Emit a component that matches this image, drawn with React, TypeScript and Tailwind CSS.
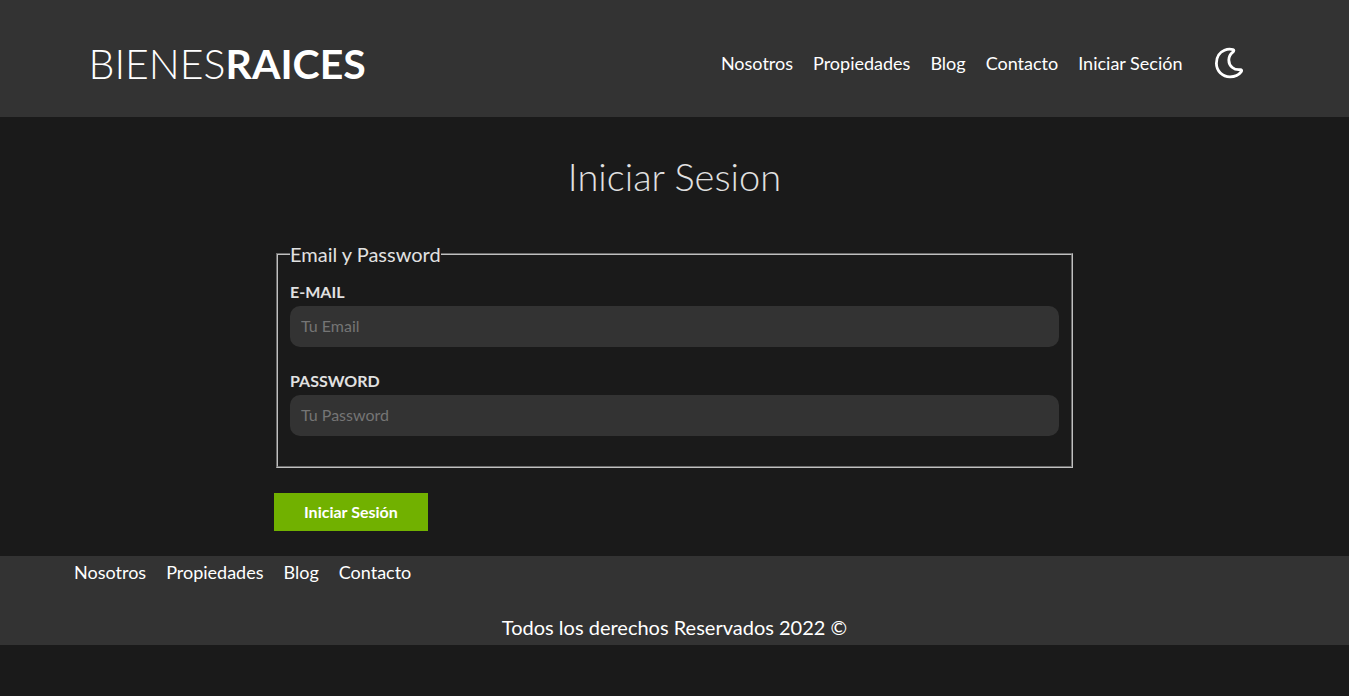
import React from "react";

const links = ["Nosotros", "Propiedades", "Blog", "Contacto"];

function NavLink({ children }: { children: React.ReactNode }) {
  return (
    <a href="#" className="text-lg leading-8 text-white">
      {children}
    </a>
  );
}

function MoonIcon() {
  return (
    <svg viewBox="0 0 32 32" className="size-8" fill="none" stroke="currentColor" strokeWidth="2.8" strokeLinejoin="round">
      <path d="M20 2.600C17.500 1.900 14.500 1.900 11.500 3.200C6.500 5.300 3.400 10.300 3.400 16.200C3.400 24 9.500 29.800 17 29.800C22 29.800 26.200 27.500 28.300 24.600C29 23.500 28.500 22.600 27.300 22.600C24.500 22.900 21.500 22.300 19.300 20.500C17 18.600 15.800 16 15.800 13C15.800 9.500 17.600 6.900 20.100 4.900C21.200 3.900 21 2.900 20 2.600Z" />
    </svg>
  );
}

function Field({ id, label, type, placeholder }: { id: string; label: string; type: string; placeholder: string }) {
  return (
    <div className="mb-5 flex flex-col">
      <label htmlFor={id} className="text-base leading-7 font-bold uppercase">
        {label}
      </label>
      <input
        id={id}
        type={type}
        placeholder={placeholder}
        className="h-[41px] w-full rounded-[10px] bg-[#333333] px-[11px] pb-0.5 text-base text-white placeholder:text-[#757575]"
      />
    </div>
  );
}

export default function App() {
  return (
    <div className="min-h-screen bg-[#1a1a1a] font-['Lato',sans-serif] text-[#e1e1e1]">
      <header className="bg-[#333333] pt-[37px] pb-7">
        <div className="mx-auto flex w-[95%] max-w-[1200px] items-center justify-between pr-[30px] pl-[14px]">
          <a href="#" className="pt-0.5 text-[41px] leading-[50px] font-light text-white">
            BIENES<span className="font-bold">RAICES</span>
          </a>
          <div className="flex items-center gap-[30px]">
            <nav className="flex gap-5">
              {links.map((l) => (
                <NavLink key={l}>{l}</NavLink>
              ))}
              <NavLink>Iniciar Seción</NavLink>
            </nav>
            <button type="button" aria-label="Modo oscuro" className="text-white">
              <MoonIcon />
            </button>
          </div>
        </div>
      </header>
      <main className="mx-auto w-full max-w-[801px] pt-[30px] pb-[25px]">
        <h1 className="text-center text-[38px] leading-[58px] font-light">Iniciar Sesion</h1>
        <form className="mt-[33px]">
          <fieldset className="mx-0.5 border-2 border-[#c0c0c0] px-3 pt-2 pb-2.5 [border-style:groove]">
            <legend className="text-xl leading-8">Email y Password</legend>
            <Field id="email" label="E-mail" type="email" placeholder="Tu Email" />
            <Field id="password" label="Password" type="password" placeholder="Tu Password" />
          </fieldset>
          <button type="submit" className="mt-[25px] bg-[#71b100] px-[30px] py-[7px] text-base leading-6 font-bold text-white">
            Iniciar Sesión
          </button>
        </form>
      </main>
      <footer className="bg-[#333333] text-white">
        <div className="mx-auto w-full max-w-[1201px] pb-0.5">
          <nav className="flex gap-5">
            {links.map((l) => (
              <NavLink key={l}>{l}</NavLink>
            ))}
          </nav>
          <p className="pt-[23px] text-center text-xl leading-8">Todos los derechos Reservados 2022 ©</p>
        </div>
      </footer>
    </div>
  );
}
